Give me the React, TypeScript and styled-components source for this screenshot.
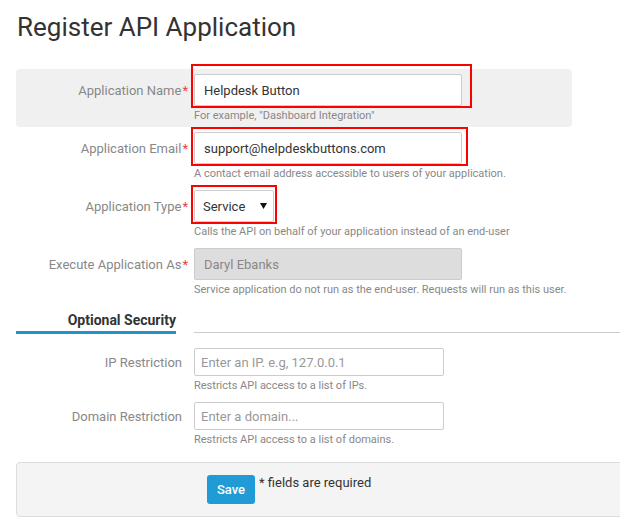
import React from 'react';
import styled, { createGlobalStyle } from 'styled-components';

const GlobalStyle = createGlobalStyle`
  body {
    margin: 0;
    background: #fff;
    font-family: Roboto, 'Liberation Sans', Arial, sans-serif;
    color: #333;
  }
`;

const Page = styled.div`
  padding: 0 0 0 16px;
  overflow: hidden;
`;

const Title = styled.h1`
  margin: 12px 0 27px 1px;
  font-size: 26px;
  line-height: 30px;
  font-weight: 400;
  color: #333;
`;

interface RowProps {
  $highlight?: boolean;
}

const Row = styled.div<RowProps>`
  display: grid;
  grid-template-columns: 172px 1fr;
  column-gap: 6px;
  width: 556px;
  padding: 5px 0 4px;
  border-radius: 4px;
  background: ${({ $highlight }) => ($highlight ? '#f0f0f0' : 'transparent')};
`;

interface LabelProps {
  $h: number;
  $required?: boolean;
}

const Label = styled.label<LabelProps>`
  height: ${({ $h }) => $h}px;
  display: flex;
  align-items: center;
  justify-content: flex-end;
  padding-right: ${({ $required }) => ($required ? 0 : 6)}px;
  font-size: 13px;
  color: #888;
  white-space: nowrap;
`;

const Star = styled.span`
  color: #e4453f;
  margin-left: 1px;
`;

const Field = styled.div`
  display: flex;
  flex-direction: column;
  align-items: flex-start;
`;

const Control = styled.div<{ $w: number }>`
  position: relative;
  width: ${({ $w }) => $w}px;
`;

interface InputProps {
  $h: number;
  $pad: number;
}

const TextInput = styled.input<InputProps>`
  box-sizing: border-box;
  display: block;
  width: 100%;
  height: ${({ $h }) => $h}px;
  padding: 0 ${({ $pad }) => $pad}px;
  border: 1px solid #ccc;
  border-radius: 2px;
  font-family: inherit;
  font-size: 13px;
  color: #333;
  background: #fff;
  outline: none;

  &::placeholder {
    color: #999;
  }

  &:disabled {
    background: #ddd;
    color: #888;
    -webkit-text-fill-color: #888;
    opacity: 1;
  }
`;

const Select = styled.select`
  box-sizing: border-box;
  display: block;
  width: 100%;
  height: 32px;
  padding: 0 8px;
  border: 1px solid #ccc;
  border-radius: 2px;
  appearance: none;
  font-family: inherit;
  font-size: 13px;
  color: #333;
  background: #fff;
  outline: none;
`;

const Caret = styled.svg`
  position: absolute;
  right: 7px;
  top: 13px;
  pointer-events: none;
`;

interface MarkProps {
  $t: number;
  $r: number;
  $b: number;
  $l: number;
}

// red review annotation drawn over the control
const Mark = styled.span<MarkProps>`
  position: absolute;
  top: ${({ $t }) => -$t}px;
  right: ${({ $r }) => -$r}px;
  bottom: ${({ $b }) => -$b}px;
  left: ${({ $l }) => -$l}px;
  border: 2px solid #f00;
  pointer-events: none;
`;

const Help = styled.div`
  margin-top: 3px;
  font-size: 11px;
  line-height: 14px;
  color: #888;
  white-space: nowrap;
`;

const SectionHead = styled.div`
  display: flex;
  margin-top: 11px;
`;

const Tab = styled.div`
  width: 160px;
  padding-bottom: 3px;
  border-bottom: 3px solid #2592c8;
  text-align: right;
  font-size: 14px;
  font-weight: 700;
  line-height: 16px;
  color: #333;
`;

const Rule = styled.div`
  flex: 1;
  align-self: flex-end;
  margin: 0 0 1px 18px;
  border-top: 1px solid #ccc;
`;

const Optional = styled.div`
  margin-top: 9px;
`;

const Footer = styled.div`
  box-sizing: border-box;
  display: flex;
  align-items: flex-start;
  gap: 4px;
  height: 55px;
  margin: 11px -20px 0 0;
  padding: 12px 0 0 190px;
  border: 1px solid #ddd;
  border-radius: 4px;
  background: #f4f4f4;
`;

const SaveButton = styled.button`
  width: 48px;
  height: 29px;
  padding: 0;
  border: none;
  border-radius: 3px;
  background: #219bd6;
  color: #fff;
  font-family: inherit;
  font-size: 13px;
  font-weight: 500;
`;

const Note = styled.span`
  font-size: 13px;
  line-height: 16px;
  color: #333;
`;

export default function App() {
  return (
    <Page>
      <GlobalStyle />
      <Title>Register API Application</Title>

      <Row $highlight>
        <Label $h={32} $required>
          Application Name<Star>*</Star>
        </Label>
        <Field>
          <Control $w={268}>
            <TextInput $h={32} $pad={9} defaultValue="Helpdesk Button" />
            <Mark $t={10} $r={10} $b={2} $l={3} />
          </Control>
          <Help>For example, "Dashboard Integration"</Help>
        </Field>
      </Row>

      <Row>
        <Label $h={32} $required>
          Application Email<Star>*</Star>
        </Label>
        <Field>
          <Control $w={268}>
            <TextInput $h={32} $pad={9} defaultValue="support@helpdeskbuttons.com" />
            <Mark $t={5} $r={6} $b={2} $l={3} />
          </Control>
          <Help>A contact email address accessible to users of your application.</Help>
        </Field>
      </Row>

      <Row>
        <Label $h={32} $required>
          Application Type<Star>*</Star>
        </Label>
        <Field>
          <Control $w={80}>
            <Select defaultValue="service">
              <option value="service">Service</option>
              <option value="user">User</option>
            </Select>
            <Caret width="7" height="6" viewBox="0 0 7 6">
              <polygon points="0,0 7,0 3.5,6" fill="#111" />
            </Caret>
            <Mark $t={5} $r={3} $b={2} $l={3} />
          </Control>
          <Help>Calls the API on behalf of your application instead of an end-user</Help>
        </Field>
      </Row>

      <Row>
        <Label $h={32} $required>
          Execute Application As<Star>*</Star>
        </Label>
        <Field>
          <Control $w={268}>
            <TextInput $h={32} $pad={9} defaultValue="Daryl Ebanks" disabled />
          </Control>
          <Help>Service application do not run as the end-user. Requests will run as this user.</Help>
        </Field>
      </Row>

      <SectionHead>
        <Tab>Optional Security</Tab>
        <Rule />
      </SectionHead>

      <Optional>
        <Row>
          <Label $h={28}>IP Restriction</Label>
          <Field>
            <Control $w={250}>
              <TextInput $h={28} $pad={6} placeholder="Enter an IP. e.g, 127.0.0.1" />
            </Control>
            <Help>Restricts API access to a list of IPs.</Help>
          </Field>
        </Row>
        <Row>
          <Label $h={28}>Domain Restriction</Label>
          <Field>
            <Control $w={250}>
              <TextInput $h={28} $pad={6} placeholder="Enter a domain..." />
            </Control>
            <Help>Restricts API access to a list of domains.</Help>
          </Field>
        </Row>
      </Optional>

      <Footer>
        <SaveButton>Save</SaveButton>
        <Note>* fields are required</Note>
      </Footer>
    </Page>
  );
}
